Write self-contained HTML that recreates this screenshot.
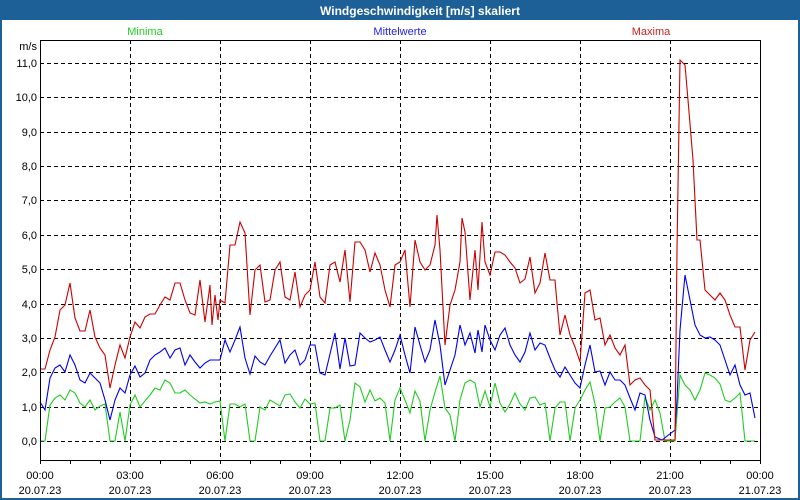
<!DOCTYPE html>
<html><head><meta charset="utf-8"><style>
html,body{margin:0;padding:0;background:#fff;}
svg{display:block;}
text{font-family:"Liberation Sans","DejaVu Sans",sans-serif;font-size:11px;}
</style></head><body>
<svg width="800" height="500" xmlns="http://www.w3.org/2000/svg">
<rect x="0" y="0" width="800" height="500" fill="#1d5f97"/>
<rect x="2" y="20" width="796" height="478" fill="#fff"/>
<text x="420" y="15" text-anchor="middle" fill="#fff" font-weight="bold" style="font-size:12px">Windgeschwindigkeit [m/s] skaliert</text>
<text x="145" y="35" text-anchor="middle" fill="#22cc22">Minima</text>
<text x="400" y="35" text-anchor="middle" fill="#2222ee">Mittelwerte</text>
<text x="651" y="35" text-anchor="middle" fill="#cc2222">Maxima</text>
<g stroke="#000" stroke-width="1" stroke-dasharray="4,3" shape-rendering="crispEdges">
<line x1="40" x2="760" y1="441.5" y2="441.5"/><line x1="40" x2="760" y1="407.5" y2="407.5"/>
<line x1="40" x2="760" y1="372.5" y2="372.5"/><line x1="40" x2="760" y1="338.5" y2="338.5"/>
<line x1="40" x2="760" y1="304.5" y2="304.5"/><line x1="40" x2="760" y1="269.5" y2="269.5"/>
<line x1="40" x2="760" y1="235.5" y2="235.5"/><line x1="40" x2="760" y1="200.5" y2="200.5"/>
<line x1="40" x2="760" y1="166.5" y2="166.5"/><line x1="40" x2="760" y1="132.5" y2="132.5"/>
<line x1="40" x2="760" y1="97.5" y2="97.5"/><line x1="40" x2="760" y1="63.5" y2="63.5"/>
<line y1="40" y2="460" x1="130.5" x2="130.5"/><line y1="40" y2="460" x1="220.5" x2="220.5"/>
<line y1="40" y2="460" x1="310.5" x2="310.5"/><line y1="40" y2="460" x1="400.5" x2="400.5"/>
<line y1="40" y2="460" x1="490.5" x2="490.5"/><line y1="40" y2="460" x1="580.5" x2="580.5"/>
<line y1="40" y2="460" x1="670.5" x2="670.5"/>
</g>
<g fill="#000" text-anchor="end">
<text x="37" y="50">m/s</text>
<text x="37" y="445">0,0</text><text x="37" y="411">1,0</text><text x="37" y="376">2,0</text>
<text x="37" y="342">3,0</text><text x="37" y="308">4,0</text><text x="37" y="273">5,0</text>
<text x="37" y="239">6,0</text><text x="37" y="204">7,0</text><text x="37" y="170">8,0</text>
<text x="37" y="136">9,0</text><text x="37" y="101">10,0</text><text x="37" y="67">11,0</text>
</g>
<g fill="#000" text-anchor="middle">
<text x="40" y="479">00:00</text><text x="40" y="494">20.07.23</text>
<text x="130" y="479">03:00</text><text x="130" y="494">20.07.23</text>
<text x="220" y="479">06:00</text><text x="220" y="494">20.07.23</text>
<text x="310" y="479">09:00</text><text x="310" y="494">20.07.23</text>
<text x="400" y="479">12:00</text><text x="400" y="494">20.07.23</text>
<text x="490" y="479">15:00</text><text x="490" y="494">20.07.23</text>
<text x="580" y="479">18:00</text><text x="580" y="494">20.07.23</text>
<text x="670" y="479">21:00</text><text x="670" y="494">20.07.23</text>
<text x="760" y="479">00:00</text><text x="760" y="494">21.07.23</text>
</g>
<g fill="none" stroke-width="1.1" stroke-linejoin="miter">
<polyline stroke="#22cc22" points="40,441 45,441 50,405 55,398 60,395 65,400 70,390 75,393 80,403 85,407 90,400 95,410 100,406 105,404 110,441 115,441 120,412 125,441 130,405 135,395 140,407 150,395 155,388 160,390 165,380 170,383 175,393 180,393 185,390 190,395 200,403 205,402 210,404 215,402 220,401 225,441 230,404 235,404 240,407 245,404 250,441 255,441 260,407 265,410 270,400 280,406 285,395 290,394 295,402 300,408 305,399 310,404 315,403 320,441 325,441 330,408 335,408 340,405 345,441 350,420 355,383 360,387 365,402 370,390 375,401 380,398 385,403 390,441 395,400 400,388 405,400 410,413 415,391 420,401 425,441 430,410 435,392 440,376 445,408 450,415 455,441 460,400 465,383 470,380 475,383 480,407 485,391 490,407 495,383 500,403 505,412 510,404 515,393 520,404 525,410 530,398 535,397 540,405 545,403 550,441 555,408 560,402 565,402 570,441 575,408 580,400 585,390 590,382 595,404 600,441 605,408 610,407 615,402 620,398 625,407 630,441 635,441 640,441 645,397 650,410 655,400 660,413 665,441 675,441 680,375 685,385 690,390 695,400 700,390 705,373 710,375 715,378 720,384 725,400 730,402 735,398 740,393 745,441 755,441"/>
<polyline stroke="#0000ee" points="40,402 45,410 50,378 55,368 60,365 65,372 70,355 75,365 80,380 85,383 90,373 95,378 100,383 105,400 110,420 115,400 120,388 125,393 130,375 135,366 140,377 145,373 150,360 155,355 160,352 165,348 170,358 175,350 180,348 185,365 190,355 195,362 200,368 205,363 210,360 215,360 220,360 225,340 230,352 235,340 240,327 245,358 250,374 255,356 260,362 265,365 270,356 280,340 285,363 290,355 295,350 300,365 305,360 310,345 315,345 320,373 325,375 335,333 340,369 345,338 350,366 355,365 360,333 365,338 370,342 375,340 380,337 385,350 390,362 395,350 400,335 405,355 410,373 415,327 420,345 425,362 430,350 435,320 440,345 445,385 450,370 455,355 460,325 465,345 470,333 475,353 478,330 482,352 485,325 490,340 495,350 500,335 505,328 510,345 515,355 520,362 525,352 530,333 535,350 540,343 545,345 550,358 555,370 560,377 565,367 570,375 575,383 580,388 585,365 590,345 595,372 600,371 605,385 610,372 615,380 620,380 625,385 630,398 635,410 640,393 645,395 650,420 655,437 662,440 675,430 677,400 680,330 685,275 690,300 695,325 700,335 705,338 710,337 715,340 720,345 725,360 730,375 735,365 740,385 745,395 750,393 755,418"/>
<polyline stroke="#cc0000" points="40,369 45,369 50,350 55,337 60,310 65,305 70,283 75,318 80,331 85,331 90,310 95,337 100,348 105,355 110,388 115,365 120,345 125,358 130,337 135,322 140,328 145,317 150,314 155,314 160,305 165,297 170,300 175,283 180,283 185,300 190,313 195,315 200,280 205,322 210,285 212,325 215,295 218,320 220,300 225,303 230,245 235,245 240,222 245,233 250,315 255,270 260,265 265,302 270,300 275,270 280,262 285,297 290,300 295,272 300,307 305,295 310,290 315,262 320,297 325,303 330,265 335,262 340,282 345,250 350,302 355,242 360,242 365,250 370,272 375,253 380,265 385,290 390,307 395,265 400,262 405,250 410,307 415,240 420,262 425,270 430,265 435,245 437,215 440,250 445,345 450,305 455,290 460,262 462,218 465,232 470,300 475,250 478,290 482,222 485,262 490,275 495,252 500,252 505,255 510,262 515,268 520,283 525,279 530,257 535,293 540,283 545,253 550,280 555,280 557,303 560,335 565,315 570,335 575,347 580,362 585,293 590,290 595,320 600,318 605,345 610,335 615,348 620,355 625,345 630,385 635,380 640,378 645,385 650,390 655,440 662,440 675,440 677,250 680,60 685,65 688,100 693,160 697,240 700,240 705,290 710,295 715,300 720,293 725,300 730,315 735,327 740,327 745,370 750,340 755,332"/>
</g>
<g stroke="#000" stroke-width="1" shape-rendering="crispEdges">
<line x1="40.5" y1="40" x2="40.5" y2="460.5"/>
<line x1="40" y1="40.5" x2="760.5" y2="40.5"/>
<line x1="760.5" y1="40" x2="760.5" y2="460.5"/>
<line x1="40" y1="460.5" x2="760.5" y2="460.5"/>
<path d="M40.5 460v4M70.5 460v4M100.5 460v4M130.5 460v4M160.5 460v4M190.5 460v4M220.5 460v4M250.5 460v4M280.5 460v4M310.5 460v4M340.5 460v4M370.5 460v4M400.5 460v4M430.5 460v4M460.5 460v4M490.5 460v4M520.5 460v4M550.5 460v4M580.5 460v4M610.5 460v4M640.5 460v4M670.5 460v4M700.5 460v4M730.5 460v4M760.5 460v4"/>
</g>
</svg>
</body></html>
